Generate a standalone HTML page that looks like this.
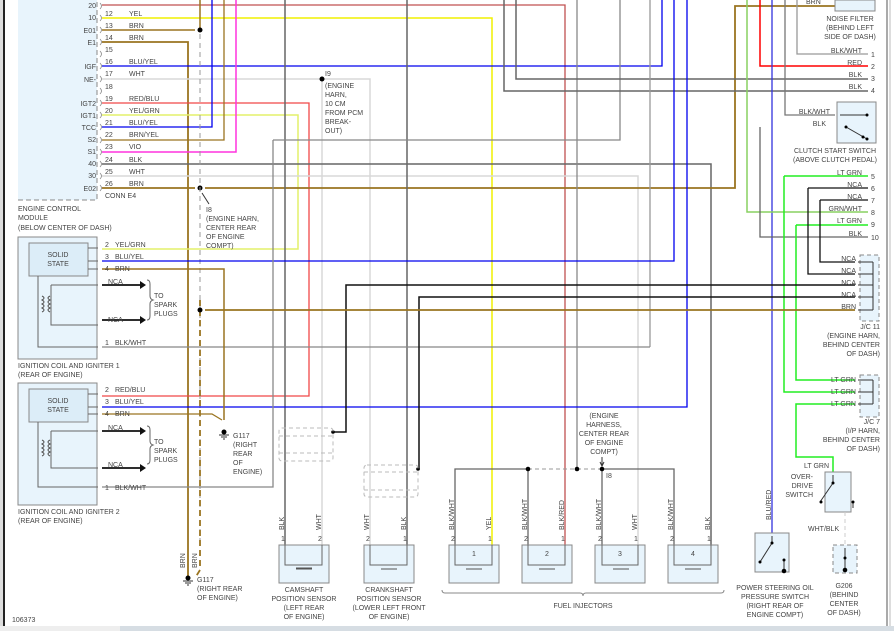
<!DOCTYPE html>
<html><head><meta charset="utf-8"><style>
html,body{margin:0;padding:0;background:#fff;}
svg{display:block;font-family:"Liberation Sans",sans-serif;}
text{font-size:7px;fill:#444;}
</style></head><body>
<svg width="894" height="631" viewBox="0 0 894 631" xmlns="http://www.w3.org/2000/svg">
<rect width="894" height="631" fill="#fff"/>
<!-- borders -->
<rect x="0" y="0" width="3" height="631" fill="#ddd"/>
<rect x="3" y="0" width="2" height="631" fill="#222"/>
<line x1="887" y1="0" x2="887" y2="626" stroke="#555" stroke-width="1"/>
<line x1="890" y1="0" x2="890" y2="626" stroke="#bbb" stroke-width="1"/>
<rect x="0" y="626" width="894" height="5" fill="#d6dde3"/>
<rect x="0" y="626" width="120" height="5" fill="#eee"/>

<!-- ECM box -->
<rect x="18" y="0" width="79" height="200" fill="#e8f4fc"/>
<path d="M18 200 H97 V0" fill="none" stroke="#888" stroke-dasharray="5,3"/>
<g text-anchor="end">
<text x="96" y="8">20</text><text x="96" y="20">10</text><text x="96" y="33">E01</text><text x="96" y="45">E1</text>
<text x="96" y="69">IGF</text><text x="96" y="82">NE-</text><text x="96" y="106">IGT2</text><text x="96" y="118">IGT1</text>
<text x="96" y="130">TCC</text><text x="96" y="142">S2</text><text x="96" y="154">S1</text><text x="96" y="166">40</text>
<text x="96" y="178">30</text><text x="96" y="191">E02</text>
</g>
<g>
<text x="105" y="16">12</text><text x="129" y="16">YEL</text>
<text x="105" y="28">13</text><text x="129" y="28">BRN</text>
<text x="105" y="40">14</text><text x="129" y="40">BRN</text>
<text x="105" y="52">15</text>
<text x="105" y="64">16</text><text x="129" y="64">BLU/YEL</text>
<text x="105" y="76">17</text><text x="129" y="76">WHT</text>
<text x="105" y="89">18</text>
<text x="105" y="101">19</text><text x="129" y="101">RED/BLU</text>
<text x="105" y="113">20</text><text x="129" y="113">YEL/GRN</text>
<text x="105" y="125">21</text><text x="129" y="125">BLU/YEL</text>
<text x="105" y="137">22</text><text x="129" y="137">BRN/YEL</text>
<text x="105" y="149">23</text><text x="129" y="149">VIO</text>
<text x="105" y="162">24</text><text x="129" y="162">BLK</text>
<text x="105" y="174">25</text><text x="129" y="174">WHT</text>
<text x="105" y="186">26</text><text x="129" y="186">BRN</text>
<text x="105" y="198">CONN E4</text>
<text x="18" y="211">ENGINE CONTROL</text><text x="18" y="220">MODULE</text><text x="18" y="230">(BELOW CENTER OF DASH)</text>
</g>
<g stroke="#888" fill="none" stroke-width="0.8">
<path d="M100 3 q3 3 0 6 M100 15 q3 3 0 6 M100 27 q3 3 0 6 M100 39 q3 3 0 6 M100 51 q3 3 0 6 M100 63 q3 3 0 6 M100 76 q3 3 0 6 M100 88 q3 3 0 6 M100 100 q3 3 0 6 M100 112 q3 3 0 6 M100 124 q3 3 0 6 M100 137 q3 3 0 6 M100 149 q3 3 0 6 M100 161 q3 3 0 6 M100 173 q3 3 0 6 M100 185 q3 3 0 6"/>
</g>

<!-- wires from ECM -->
<g fill="none" stroke-width="1.3">
<path d="M102 5 H565 V545" stroke="#c05050"/>
<path d="M102 18 H492 V545" stroke="#f0f000" stroke-width="1.5"/>
<path d="M102 30 H195" stroke="#9a7420" stroke-width="1.5"/>
<path d="M200 0 V30" stroke="#9a7420" stroke-width="1.5"/>
<path d="M102 42 H188 V577" stroke="#9a7420" stroke-width="1.8"/>
<path d="M102 66 H662 V0" stroke="#0000ee"/>
<path d="M102 79 H370 V545" stroke="#d8d8d8" stroke-width="1.5"/>
<path d="M322 79 V545" stroke="#d8d8d8" stroke-width="1.5"/>
<path d="M102 103 H309 V396 H102" stroke="#f04848"/>
<path d="M102 115 H298 V249 H102" stroke="#e4f06a" stroke-width="1.5"/>
<path d="M102 127 H212 V0" stroke="#0000ee"/>
<path d="M102 140 H224 V0" stroke="#9a7420"/>
<path d="M102 152 H236 V0" stroke="#ff33dd" stroke-width="1.5"/>
<path d="M102 164 H711 V545" stroke="#666" stroke-width="1.5"/>
<path d="M102 176 H638 V545" stroke="#d8d8d8" stroke-width="1.5"/>
<path d="M102 188 H195 M205 188 H735 V6 H835" stroke="#9a7420" stroke-width="1.8"/>
</g>
<circle cx="200" cy="30" r="2.5" fill="#000"/>
<circle cx="200" cy="188" r="2.5" fill="#000"/>
<circle cx="322" cy="79" r="2.5" fill="#000"/>
<path d="M200 34 V540" stroke="#999" stroke-dasharray="5,4" fill="none"/>
<path d="M200 300 V570 L195 578" stroke="#9a7420" stroke-width="1.8" stroke-dasharray="6,4" fill="none"/>
<circle cx="200" cy="310" r="2.5" fill="#000"/>
<text x="206" y="212">I8</text><text x="206" y="221">(ENGINE HARN,</text><text x="206" y="230">CENTER REAR</text><text x="206" y="239">OF ENGINE</text><text x="206" y="248">COMPT)</text>
<path d="M209 204 L202 193" stroke="#333"/>
<text x="325" y="76">I9</text><text x="325" y="88">(ENGINE</text><text x="325" y="97">HARN,</text><text x="325" y="106">10 CM</text><text x="325" y="115">FROM PCM</text><text x="325" y="124">BREAK-</text><text x="325" y="133">OUT)</text>

<!-- other verticals/horizontals -->
<g fill="none" stroke-width="1.3">
<path d="M285 0 V545" stroke="#666" stroke-width="1.5"/>
<path d="M407 0 V545" stroke="#666" stroke-width="1.5"/>
<path d="M577 0 V469" stroke="#888"/>
<path d="M273 140 H620 V0" stroke="#888"/>
<path d="M504 0 V91 H868" stroke="#666" stroke-width="1.5"/>
<path d="M516 0 V79 H868" stroke="#666" stroke-width="1.5"/>
<path d="M650 0 V347" stroke="#999"/>
<path d="M674 0 V261 H102" stroke="#0000ee"/>
<path d="M687 0 V407 H102" stroke="#0000ee"/>
<path d="M273 140 V487 H102" stroke="#888"/>
<path d="M102 347 H650" stroke="#888"/>
<path d="M760 0 V66 H868" stroke="#ff0000" stroke-width="1.5"/>
<path d="M772 0 V540" stroke="#3333dd" stroke-width="1.3"/>
<path d="M747 0 V212 H868" stroke="#88d060" stroke-width="1.5"/>
<path d="M785 0 V115 H835" stroke="#777"/>
<path d="M760 127 V237 H868" stroke="#666"/>
<path d="M797 0 V54 H868" stroke="#999"/>
<path d="M784 176 H868 M784 176 V392 H855" stroke="#22ee22" stroke-width="1.5"/>
<path d="M796 225 H868 M796 225 V380 H855" stroke="#22ee22" stroke-width="1.5"/>
<path d="M855 404 H796 V457 H833 V472" stroke="#22ee22" stroke-width="1.5"/>
<path d="M808 188 H868 M808 188 V274 H855" stroke="#111"/>
<path d="M820 200 H868 M820 200 V262 H855" stroke="#111"/>
<path d="M855 285 H346 V432 H333" stroke="#111" stroke-width="1.5"/>
<path d="M855 297 H419 V469 H418" stroke="#111" stroke-width="1.5"/>
<path d="M855 310 H205" stroke="#9a7420" stroke-width="1.8"/>
<path d="M102 269 H224 V420" stroke="#9a7420" stroke-width="1.5"/>
<path d="M102 414 H212 L222 420" stroke="#9a7420" stroke-width="1.3"/>
</g>
<circle cx="333" cy="432" r="1.8" fill="#000"/><circle cx="418" cy="469" r="1.8" fill="#000"/>
<!-- G117 near -->
<circle cx="224" cy="432" r="2.5" fill="#000"/><path d="M219 435 h10 M221 437 h6 M223 439 h2" stroke="#333"/>
<text x="233" y="438">G117</text><text x="233" y="447">(RIGHT</text><text x="233" y="456">REAR</text><text x="233" y="465">OF</text><text x="233" y="474">ENGINE)</text>

<!-- Igniters -->
<g>
<rect x="18" y="237" width="79" height="122" fill="#e8f4fc" stroke="#888"/>
<rect x="29" y="243" width="59" height="33" fill="#dcedf8" stroke="#888"/>
<text x="58" y="257" text-anchor="middle">SOLID</text><text x="58" y="266" text-anchor="middle">STATE</text>
<rect x="18" y="383" width="79" height="122" fill="#e8f4fc" stroke="#888"/>
<rect x="29" y="389" width="59" height="33" fill="#dcedf8" stroke="#888"/>
<text x="58" y="403" text-anchor="middle">SOLID</text><text x="58" y="412" text-anchor="middle">STATE</text>
<path d="M88 248 H98 M88 261 H98 M88 269 H98 M51 285 H98 M51 285 V325 H98 M38 276 V347 H98" stroke="#666" fill="none"/>
<path d="M88 394 H98 M88 407 H98 M88 414 H98 M51 431 H98 M51 431 V468 H98 M38 422 V487 H98" stroke="#666" fill="none"/>
<path d="M42 296 q4 2 0 4 q4 2 0 4 q4 2 0 4 q4 2 0 4 M50 296 q-4 2 0 4 q-4 2 0 4 q-4 2 0 4 q-4 2 0 4" stroke="#555" fill="none"/>
<path d="M42 440 q4 2 0 4 q4 2 0 4 q4 2 0 4 q4 2 0 4 M50 440 q-4 2 0 4 q-4 2 0 4 q-4 2 0 4 q-4 2 0 4" stroke="#555" fill="none"/>
<path d="M102 285 H140 M102 320 H140 M102 431 H140 M102 468 H140" stroke="#111" stroke-width="1.8"/>
<path d="M140 281 l6 4 l-6 4z M140 316 l6 4 l-6 4z M140 427 l6 4 l-6 4z M140 464 l6 4 l-6 4z" fill="#111"/>
<path d="M147 280 q3 0 3 4 v12 q0 3 3 4 q-3 1 -3 4 v12 q0 4 -3 4 M147 426 q3 0 3 4 v11 q0 3 3 4 q-3 1 -3 4 v11 q0 4 -3 4" stroke="#666" fill="none"/>
<text x="105" y="247">2</text><text x="115" y="247">YEL/GRN</text>
<text x="105" y="259">3</text><text x="115" y="259">BLU/YEL</text>
<text x="105" y="271">4</text><text x="115" y="271">BRN</text>
<text x="108" y="284">NCA</text><text x="108" y="322">NCA</text>
<text x="105" y="345">1</text><text x="115" y="345">BLK/WHT</text>
<text x="154" y="298">TO</text><text x="154" y="307">SPARK</text><text x="154" y="316">PLUGS</text>
<text x="18" y="368">IGNITION COIL AND IGNITER 1</text><text x="18" y="377">(REAR OF ENGINE)</text>
<text x="105" y="392">2</text><text x="115" y="392">RED/BLU</text>
<text x="105" y="404">3</text><text x="115" y="404">BLU/YEL</text>
<text x="105" y="416">4</text><text x="115" y="416">BRN</text>
<text x="108" y="430">NCA</text><text x="108" y="467">NCA</text>
<text x="105" y="490">1</text><text x="115" y="490">BLK/WHT</text>
<text x="154" y="444">TO</text><text x="154" y="453">SPARK</text><text x="154" y="462">PLUGS</text>
<text x="18" y="514">IGNITION COIL AND IGNITER 2</text><text x="18" y="523">(REAR OF ENGINE)</text>
</g>

<!-- shields -->
<g fill="none" stroke="#bbb" stroke-dasharray="4,3">
<rect x="279" y="428" width="54" height="33" rx="3"/><line x1="279" y1="436" x2="333" y2="436"/><line x1="279" y1="453" x2="333" y2="453"/>
<rect x="364" y="465" width="54" height="32" rx="3"/><line x1="364" y1="472" x2="418" y2="472"/><line x1="364" y1="490" x2="418" y2="490"/>
</g>

<!-- G117 bottom -->
<circle cx="188" cy="578" r="2.5" fill="#000"/><path d="M183 581 h10 M185 583 h6 M187 585 h2" stroke="#333"/>
<text x="197" y="582">G117</text><text x="197" y="591">(RIGHT REAR</text><text x="197" y="600">OF ENGINE)</text>
<text transform="translate(185 568) rotate(-90)">BRN</text><text transform="translate(197 568) rotate(-90)">BRN</text>

<!-- injector bus -->
<path d="M455 545 V469 H528" stroke="#666" stroke-width="1.3" fill="none"/>
<path d="M528 469 H602" stroke="#999" stroke-dasharray="4,3"/>
<path d="M528 469 V545 M602 469 V545 M602 469 H674 V545" stroke="#666" stroke-width="1.3" fill="none"/>
<circle cx="528" cy="469" r="2.3" fill="#000"/><circle cx="577" cy="469" r="2.3" fill="#000"/><circle cx="602" cy="469" r="2.3" fill="#000"/>
<text x="606" y="478">I8</text>
<path d="M602 457 v8 M600 462 l2 4 l2 -4" stroke="#333" fill="none"/>
<g text-anchor="middle"><text x="604" y="418">(ENGINE</text><text x="604" y="427">HARNESS,</text><text x="604" y="436">CENTER REAR</text><text x="604" y="445">OF ENGINE</text><text x="604" y="454">COMPT)</text></g>

<!-- sensors & injectors -->
<g>
<rect x="279" y="545" width="50" height="38" fill="#e8f4fc" stroke="#888"/>
<rect x="364" y="545" width="50" height="38" fill="#e8f4fc" stroke="#888"/>
<rect x="449" y="545" width="50" height="38" fill="#e8f4fc" stroke="#888"/>
<rect x="522" y="545" width="50" height="38" fill="#e8f4fc" stroke="#888"/>
<rect x="595" y="545" width="50" height="38" fill="#e8f4fc" stroke="#888"/>
<rect x="668" y="545" width="50" height="38" fill="#e8f4fc" stroke="#888"/>
<path d="M285 545 V565 H322 V545 M370 545 V565 H407 V545 M455 545 V565 H492 V545 M528 545 V565 H565 V545 M602 545 V565 H638 V545 M674 545 V565 H711 V545" stroke="#666" fill="none"/>
<path d="M296 568 h16 M370 0" stroke="#555"/>
<g stroke="#555"><path d="M296 569 h16 M381 569 h16 M466 569 h16 M539 569 h16 M613 569 h16 M685 569 h16"/></g>
<g text-anchor="middle"><text x="474" y="556">1</text><text x="547" y="556">2</text><text x="620" y="556">3</text><text x="693" y="556">4</text></g>
<g text-anchor="middle">
<text x="304" y="592">CAMSHAFT</text><text x="304" y="601">POSITION SENSOR</text><text x="304" y="610">(LEFT REAR</text><text x="304" y="619">OF ENGINE)</text>
<text x="389" y="592">CRANKSHAFT</text><text x="389" y="601">POSITION SENSOR</text><text x="389" y="610">(LOWER LEFT FRONT</text><text x="389" y="619">OF ENGINE)</text>
<text x="583" y="608">FUEL INJECTORS</text>
</g>
<path d="M442 590 q0 3 3 3 H580 q3 0 3 3 q0 -3 3 -3 H721 q3 0 3 -3" stroke="#888" fill="none"/>
<g>
<text transform="translate(284 530) rotate(-90)">BLK</text><text transform="translate(321 530) rotate(-90)">WHT</text>
<text transform="translate(369 530) rotate(-90)">WHT</text><text transform="translate(406 530) rotate(-90)">BLK</text>
<text transform="translate(454 530) rotate(-90)">BLK/WHT</text><text transform="translate(491 530) rotate(-90)">YEL</text>
<text transform="translate(527 530) rotate(-90)">BLK/WHT</text><text transform="translate(564 530) rotate(-90)">BLK/RED</text>
<text transform="translate(601 530) rotate(-90)">BLK/WHT</text><text transform="translate(637 530) rotate(-90)">WHT</text>
<text transform="translate(673 530) rotate(-90)">BLK/WHT</text><text transform="translate(710 530) rotate(-90)">BLK</text>
<text transform="translate(771 520) rotate(-90)">BLU/RED</text>
</g>
<g><text x="281" y="541">1</text><text x="318" y="541">2</text><text x="366" y="541">2</text><text x="403" y="541">1</text>
<text x="451" y="541">2</text><text x="488" y="541">1</text><text x="524" y="541">2</text><text x="561" y="541">1</text>
<text x="598" y="541">2</text><text x="634" y="541">1</text><text x="670" y="541">2</text><text x="707" y="541">1</text></g>
</g>

<!-- right side components -->
<rect x="835" y="0" width="40" height="11" fill="#e8f4fc" stroke="#888"/>
<g text-anchor="middle"><text x="850" y="21">NOISE FILTER</text><text x="850" y="30">(BEHIND LEFT</text><text x="850" y="39">SIDE OF DASH)</text></g>
<text x="806" y="4">BRN</text>
<g text-anchor="end">
<text x="862" y="53">BLK/WHT</text><text x="862" y="65">RED</text><text x="862" y="77">BLK</text><text x="862" y="89">BLK</text>
<text x="830" y="114">BLK/WHT</text><text x="826" y="126">BLK</text>
<text x="862" y="175">LT GRN</text><text x="862" y="187">NCA</text><text x="862" y="199">NCA</text><text x="862" y="211">GRN/WHT</text><text x="862" y="223">LT GRN</text><text x="862" y="236">BLK</text>
<text x="856" y="261">NCA</text><text x="856" y="273">NCA</text><text x="856" y="285">NCA</text><text x="856" y="297">NCA</text><text x="856" y="309">BRN</text>
<text x="856" y="382">LT GRN</text><text x="856" y="394">LT GRN</text><text x="856" y="406">LT GRN</text>
</g>
<g><text x="871" y="57">1</text><text x="871" y="69">2</text><text x="871" y="81">3</text><text x="871" y="93">4</text>
<text x="871" y="179">5</text><text x="871" y="191">6</text><text x="871" y="203">7</text><text x="871" y="215">8</text><text x="871" y="227">9</text><text x="871" y="240">10</text></g>
<rect x="837" y="102" width="39" height="41" fill="#e8f4fc" stroke="#888"/>
<path d="M840 115 H867 M846 127 L867 139" stroke="#333"/><circle cx="867" cy="115" r="1.5"/><circle cx="846" cy="127" r="1.5"/><circle cx="863" cy="137" r="1.5"/><circle cx="867" cy="139" r="1.5"/>
<g text-anchor="middle"><text x="835" y="153">CLUTCH START SWITCH</text><text x="835" y="162">(ABOVE CLUTCH PEDAL)</text></g>
<rect x="860" y="255" width="19" height="66" fill="#e8f4fc" stroke="#888" stroke-dasharray="4,3"/>
<path d="M858 262 H873 M858 274 H873 M858 285 H873 M858 297 H873 M858 310 H873 M873 262 V310" stroke="#333" fill="none"/>
<g text-anchor="end"><text x="880" y="329">J/C 11</text><text x="880" y="338">(ENGINE HARN,</text><text x="880" y="347">BEHIND CENTER</text><text x="880" y="356">OF DASH)</text></g>
<rect x="860" y="375" width="19" height="42" fill="#e8f4fc" stroke="#888" stroke-dasharray="4,3"/>
<path d="M858 380 H873 M858 392 H873 M858 404 H873 M873 380 V404" stroke="#333" fill="none"/>
<g text-anchor="end"><text x="880" y="424">J/C 7</text><text x="880" y="433">(I/P HARN,</text><text x="880" y="442">BEHIND CENTER</text><text x="880" y="451">OF DASH)</text></g>
<text x="804" y="468">LT GRN</text>
<rect x="825" y="472" width="26" height="40" fill="#e8f4fc" stroke="#888"/>
<path d="M833 475 V483 L820 502 M853 502 V508" stroke="#333" fill="none"/><circle cx="833" cy="483" r="1.5"/><circle cx="821" cy="502" r="1.5"/><circle cx="853" cy="502" r="1.5"/>
<g text-anchor="end"><text x="813" y="479">OVER-</text><text x="813" y="488">DRIVE</text><text x="813" y="497">SWITCH</text></g>
<text x="808" y="531">WHT/BLK</text>
<path d="M845 512 V545" stroke="#ccc" stroke-dasharray="4,3"/>
<rect x="833" y="545" width="24" height="28" fill="#e8f4fc" stroke="#888" stroke-dasharray="4,3"/>
<path d="M845 548 V570" stroke="#333"/><circle cx="845" cy="558" r="1.5"/><circle cx="845" cy="570" r="2.3"/>
<g text-anchor="middle"><text x="844" y="588">G206</text><text x="844" y="597">(BEHIND</text><text x="844" y="606">CENTER</text><text x="844" y="615">OF DASH)</text></g>
<rect x="755" y="533" width="34" height="39" fill="#e8f4fc" stroke="#888"/>
<path d="M772 536 V543 L760 562 M784 560 V570" stroke="#333" fill="none"/><circle cx="772" cy="543" r="1.5"/><circle cx="760" cy="562" r="1.5"/><circle cx="784" cy="560" r="1.5"/><circle cx="784" cy="571" r="2.3"/>
<g text-anchor="middle"><text x="775" y="590">POWER STEERING OIL</text><text x="775" y="599">PRESSURE SWITCH</text><text x="775" y="608">(RIGHT REAR OF</text><text x="775" y="617">ENGINE COMPT)</text></g>
<text x="12" y="622">106373</text>
</svg>
</body></html>
